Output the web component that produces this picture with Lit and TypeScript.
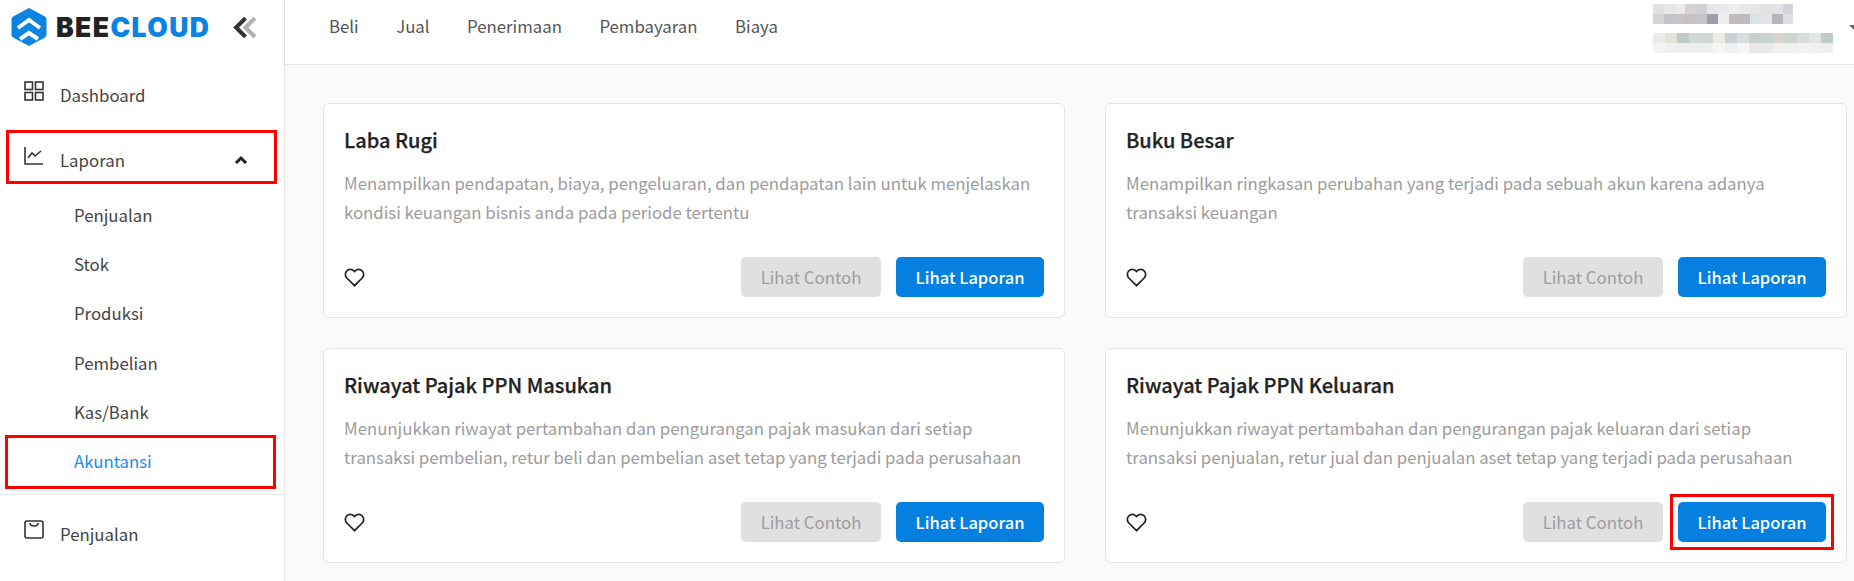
import { LitElement, html, css, svg } from "lit";
import { customElement } from "lit/decorators.js";

const cards = [
  { t: "Laba Rugi", d: ["Menampilkan pendapatan, biaya, pengeluaran, dan pendapatan lain untuk menjelaskan", "kondisi keuangan bisnis anda pada periode tertentu"] },
  { t: "Buku Besar", d: ["Menampilkan ringkasan perubahan yang terjadi pada sebuah akun karena adanya", "transaksi keuangan"] },
  { t: "Riwayat Pajak PPN Masukan", d: ["Menunjukkan riwayat pertambahan dan pengurangan pajak masukan dari setiap", "transaksi pembelian, retur beli dan pembelian aset tetap yang terjadi pada perusahaan"] },
  { t: "Riwayat Pajak PPN Keluaran", d: ["Menunjukkan riwayat pertambahan dan pengurangan pajak keluaran dari setiap", "transaksi penjualan, retur jual dan penjualan aset tetap yang terjadi pada perusahaan"], mark: true },
];
const blur1 = [
  "#e2e0e2","#e8e7e8","#ecebeb","#d8d0d4","#d2ced1","#e6e5e7","#eaeaea","#eeeeee","#eaeae4","#e6e6e6","#e2e2e2","#e2e2e6",
  "#d2d2d8","#d4d4d6","#c4c4c8","#c8c4c4","#c6c2c4","#c4c4c9","#9e9ea6","#eeeef1","#bebcbc","#bebcbc","#dee2e5","#e3e3e6","#b6b6b8","#e0dfe5",
];
const blur2 = [
  "#eaebeb","#e3e3d9","#bfcbc7","#d2d9d4","#cfd8d3","#efe9e6","#c9d1d6","#dadeda","#c9cfc9","#c7d4d4","#d9d4ca","#cad4cf","#dadcd8","#e2e6e4","#bfcdc8",
  "#f3f3f3","#eeeeee","#eeeeee","#eeeeee","#eeeeee","#f7f4f4","#efefef","#f6f6f6","#e8e8e8","#e9e9e9","#efefef","#f0f0f0","#f2f2f2","#f0f0f0","#eeeeee",
];
const heart = svg`<path d="M10 17.800 2.700 10.500a4.800 4.800 0 0 1 0-6.800 4.700 4.700 0 0 1 6.700 0l.6.6.6-.6a4.700 4.700 0 0 1 6.700 0 4.800 4.800 0 0 1 0 6.800Z"/>`;

@customElement("app-root")
export class AppRoot extends LitElement {
  static styles = css`
    :host { display: flex; width: 1854px; height: 581px; overflow: hidden; background: #fafafa;
      font-family: "Noto Sans CJK SC", "Noto Sans", sans-serif; color: #444; }
    .side { width: 284px; flex: none; background: #fff; border-right: 1px solid #e6e6e6; position: relative; height: 581px; }
    .logo { display: flex; align-items: center; height: 54px; padding: 0 0 0 11px; margin-bottom: 8px; }
    .logo svg.mark { width: 36px; height: 38px; flex: none; }
    .brand { font-family: "Inter", sans-serif; font-weight: 900; font-size: 26.500px; letter-spacing: 1.400px; margin-left: 9px; color: #222; line-height: 30px; }
    .brand b { color: #0a84e3; font-weight: 900; }
    .collapse { margin-left: 23px; width: 25px; height: 23px; flex: none; }
    .menu { display: flex; flex-direction: column; }
    .item { display: flex; align-items: center; height: 65px; padding-left: 24px; font-size: 16.800px; position: relative; }
    .item svg.ic { width: 20px; height: 20px; margin-right: 16px; margin-top: -8px; flex: none; fill: none; stroke: #333; stroke-width: 1.600; }
    .chev { position: absolute; left: 234px; top: 28px; width: 14px; height: 9px; }
    .subs { margin-top: -2px; }
    .sub { display: flex; align-items: center; height: 49.300px; padding-left: 74px; font-size: 16.800px; }
    .sub.active { color: #1a8ceb; }
    .sep { height: 1px; background: #e3e8ec; margin: 8px 0 7px; }
    .red { position: absolute; border: 3px solid #f00; box-sizing: border-box; pointer-events: none; }
    .r1 { left: 6px; top: 130px; width: 271px; height: 54px; }
    .r2 { left: 5px; top: 435px; width: 271px; height: 54px; }
    .main { flex: 1; min-width: 0; display: flex; flex-direction: column; }
    .top { height: 64px; flex: none; background: #fff; border-bottom: 1px solid #e6e6e6; display: flex; align-items: flex-start; padding-left: 44px; position: relative; }
    .nav { display: flex; gap: 37.500px; font-size: 16.800px; height: 52px; align-items: center; color: #555; }
    .user { margin-left: auto; display: flex; flex-direction: column; gap: 9px; padding-top: 4px; width: 201px; flex: none; }
    .blur { display: grid; grid-auto-rows: 10px; }
    .b1 { grid-template-columns: repeat(13, 10.800px); }
    .b2 { grid-template-columns: repeat(15, 12px); }
    .caret { position: absolute; left: 1564px; top: 25px; width: 0; height: 0; border-left: 5px solid transparent; border-right: 5px solid transparent; border-top: 5px solid #666; }
    .grid { display: grid; grid-template-columns: 742px 742px; gap: 30px 40px; padding: 38px 0 0 38px; }
    .card { background: #fff; border: 1px solid #e4e4e4; border-radius: 6px; height: 215px; box-sizing: border-box; padding: 20px 20px 20px; display: flex; flex-direction: column; position: relative; }
    .t { font-size: 20px; font-weight: 500; line-height: 32px; color: #222; -webkit-text-stroke: 0.25px #222; }
    .d { font-size: 16.800px; line-height: 29px; color: #9c9c9c; margin-top: 13px; }
    .foot { margin-top: auto; display: flex; align-items: center; gap: 15px; }
    .heart { width: 21px; height: 21px; fill: none; stroke: #222; stroke-width: 1.600; margin-right: auto; }
    .btn { height: 40px; border-radius: 5px; display: flex; align-items: center; justify-content: center; }
    .grey { width: 140px; background: #e0e0e0; color: #9d9d9d; font-size: 16.800px; }
    .blue { width: 148px; background: #0580e0; color: #fff; font-size: 16.500px; font-weight: 500; }
    .r3 { right: 12px; bottom: 12px; width: 164px; height: 56px; }
  `;
  render() {
    return html`
      <aside class="side">
        <div class="logo">
          <svg class="mark" viewBox="0 0 36 38">
            <path fill="#0a84e3" d="M18 0 33 8a4 4 0 0 1 2.500 4v14a4 4 0 0 1-2.500 4L18 38 3 30a4 4 0 0 1-2.500-4V12A4 4 0 0 1 3 8Z"/>
            <path fill="none" stroke="#fff" stroke-width="4" d="M7 20 18 12l11 8M9 31l9-6 9 6"/>
          </svg>
          <span class="brand">BEE<b>CLOUD</b></span>
          <svg class="collapse" viewBox="0 0 24 22">
            <path fill="none" stroke="#b0b0b0" stroke-width="4" d="M21 2 12 11l9 9"/>
            <path fill="none" stroke="#333" stroke-width="4" d="M12 2 3 11l9 9"/>
          </svg>
        </div>
        <div class="menu">
          <div class="item"><svg class="ic" viewBox="0 0 20 20"><rect x="1" y="1" width="7.500" height="7.500"/><rect x="11.500" y="1" width="7.500" height="7.500"/><rect x="1" y="11.500" width="7.500" height="7.500"/><rect x="11.500" y="11.500" width="7.500" height="7.500"/></svg>Dashboard</div>
          <div class="item"><svg class="ic" viewBox="0 0 20 20"><path d="M1 1v17h18M4 12l4-5 3 3 6-5"/></svg>Laporan
            <svg class="chev" viewBox="0 0 14 9"><path fill="none" stroke="#222" stroke-width="3" d="M2 8l5-5 5 5"/></svg></div>
          <div class="subs">
            <div class="sub">Penjualan</div>
            <div class="sub">Stok</div>
            <div class="sub">Produksi</div>
            <div class="sub">Pembelian</div>
            <div class="sub">Kas/Bank</div>
            <div class="sub active">Akuntansi</div>
          </div>
          <div class="sep"></div>
          <div class="item"><svg class="ic" viewBox="0 0 20 20"><rect x="1" y="1" width="18" height="17" rx="2"/><path d="M6 3c0 4 8 4 8 0"/></svg>Penjualan</div>
        </div>
        <div class="red r1"></div>
        <div class="red r2"></div>
      </aside>
      <div class="main">
        <header class="top">
          <nav class="nav"><span>Beli</span><span>Jual</span><span>Penerimaan</span><span>Pembayaran</span><span>Biaya</span></nav>
          <div class="user">
            <div class="blur b1">${blur1.map((c) => html`<i style="background:${c}"></i>`)}</div>
            <div class="blur b2">${blur2.map((c) => html`<i style="background:${c}"></i>`)}</div>
          </div>
          <div class="caret"></div>
        </header>
        <section class="grid">
          ${cards.map((c) => html`
            <article class="card">
              <div class="t">${c.t}</div>
              <div class="d">${c.d[0]}<br />${c.d[1]}</div>
              <div class="foot">
                <svg class="heart" viewBox="0 0 20 20">${heart}</svg>
                <div class="btn grey">Lihat Contoh</div>
                <div class="btn blue">Lihat Laporan</div>
              </div>
              ${c.mark ? html`<div class="red r3"></div>` : ""}
            </article>`)}
        </section>
      </div>
    `;
  }
}
